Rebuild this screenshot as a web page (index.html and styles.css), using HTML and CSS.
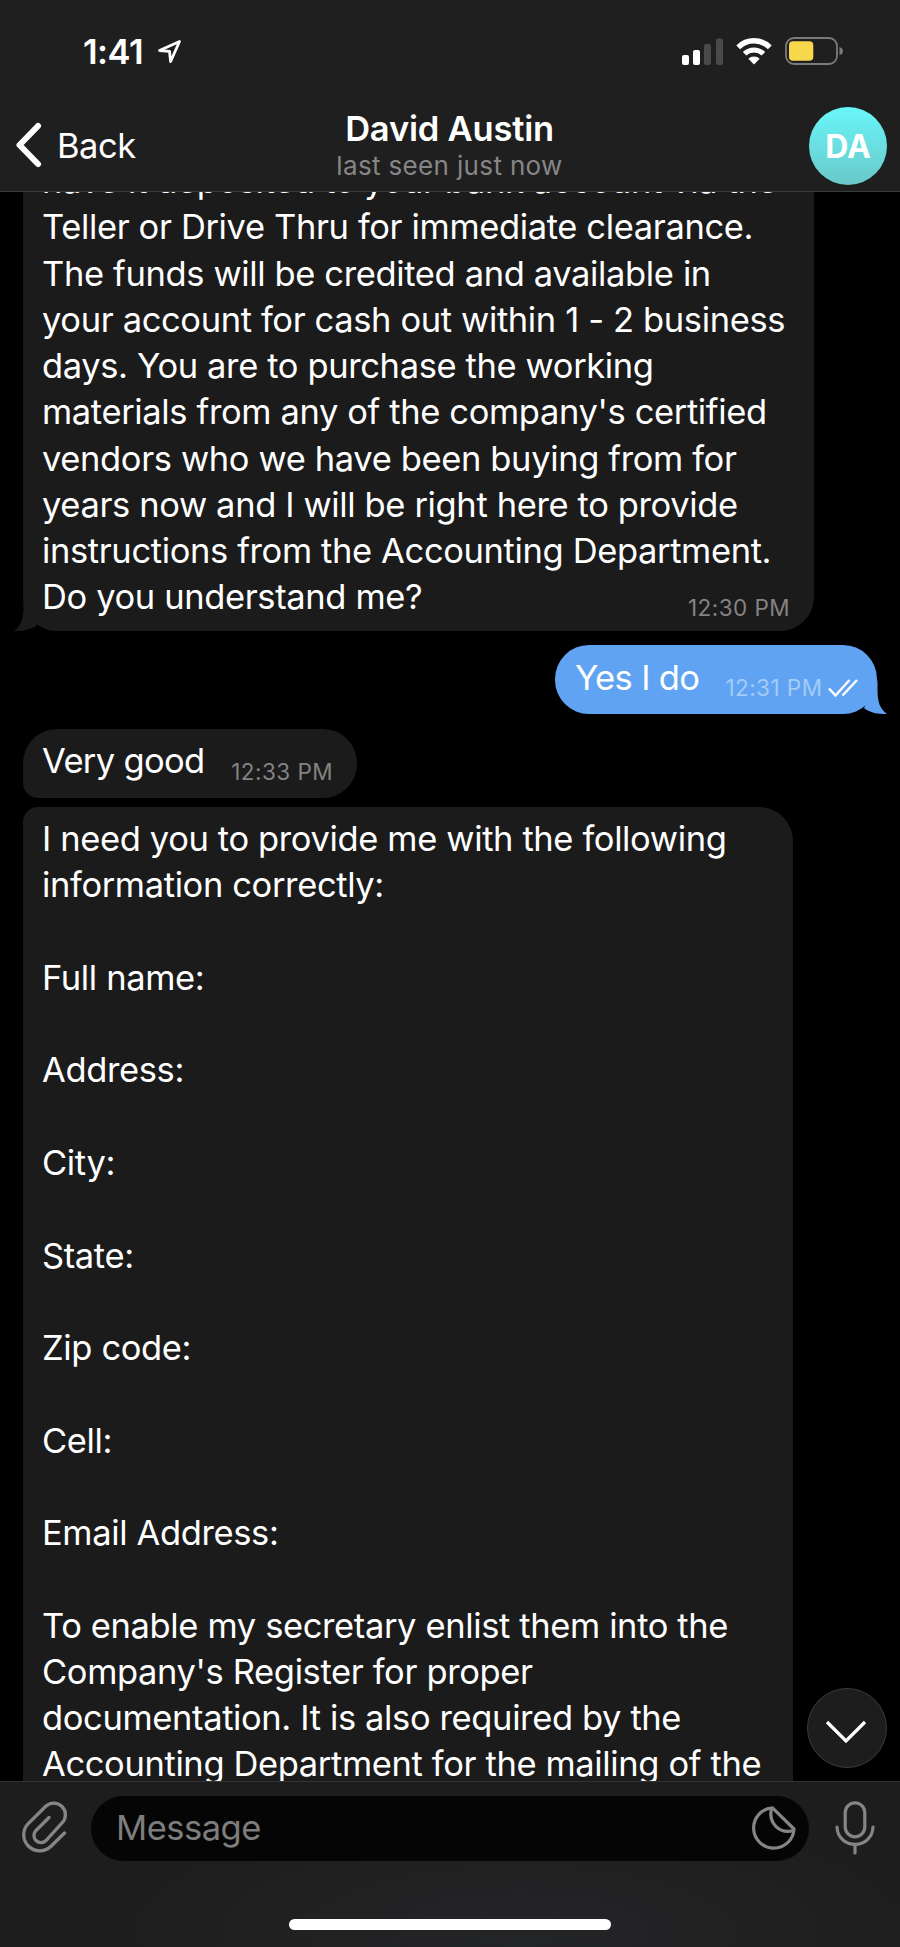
FILE: index.html
```html
<!DOCTYPE html>
<html lang="en">
  <head>
    <title>David Austin</title>
    <meta charset="utf-8">
    <link rel="stylesheet" href="styles.css">
  </head>
  <body>
    <div class="phone">
      <div class="header">
        <div class="statusbar">
          <span class="clock">1:41</span>
          <svg class="location" width="25" height="25" viewBox="0 0 25 25">
            <path d="M22.5 2.5 L2.5 11.5 L12.5 12.3 L13.6 22.5 Z" fill="none" stroke="#fff" stroke-width="2.8" stroke-linejoin="round"/>
          </svg>
          <svg class="signal" width="41" height="27" viewBox="0 0 41 27">
            <rect x="0" y="17" width="7" height="10" rx="2" fill="#fff"/>
            <rect x="11" y="12" width="7" height="15" rx="2" fill="#fff"/>
            <rect x="22" y="6" width="7" height="21" rx="2" fill="#4a4a4a"/>
            <rect x="34" y="0.5" width="7" height="26.5" rx="2" fill="#4a4a4a"/>
          </svg>
          <svg class="wifi" width="36" height="27" viewBox="0 0 36 27">
            <path d="M2.2 9.3 A22.5 22.5 0 0 1 33.8 9.3" fill="none" stroke="#fff" stroke-width="5.4"/>
            <path d="M8.6 15.7 A13.5 13.5 0 0 1 27.4 15.7" fill="none" stroke="#fff" stroke-width="5"/>
            <path d="M18 26.5 L12.3 20.8 A8 8 0 0 1 23.7 20.8 Z" fill="#fff"/>
          </svg>
          <svg class="battery" width="59" height="28" viewBox="0 0 59 28">
            <rect x="1" y="1" width="51" height="26" rx="8" fill="none" stroke="#7b7b7b" stroke-width="1.8"/>
            <rect x="4" y="4.3" width="24.3" height="19.4" rx="4" fill="#f7d74b"/>
            <path d="M54.5 10 Q58 11 58 14 Q58 17 54.5 18 Z" fill="#7b7b7b"/>
          </svg>
        </div>
        <div class="navbar">
          <div class="back">
            <svg width="28" height="48" viewBox="0 0 28 48">
              <path d="M23 5 L4.5 24 L23 43" fill="none" stroke="#fff" stroke-width="6" stroke-linecap="round" stroke-linejoin="round"/>
            </svg>
            <span>Back</span>
          </div>
          <div class="contact">
            <div class="name">David Austin</div>
            <div class="lastseen">last seen just now</div>
          </div>
          <div class="avatar">DA</div>
        </div>
      </div>

      <div class="chat">
        <div class="msg in first">
          <div class="text">have it deposited to your bank account via the<br>
            Teller or Drive Thru for immediate clearance.<br>
            The funds will be credited and available in<br>
            your account for cash out within 1 - 2 business<br>
            days. You are to purchase the working<br>
            materials from any of the company's certified<br>
            vendors who we have been buying from for<br>
            years now and I will be right here to provide<br>
            instructions from the Accounting Department.<br>
            Do you understand me?</div>
          <span class="time">12:30 PM</span>
          <svg class="tail" width="24" height="34" viewBox="0 0 24 34">
            <path d="M9.5 0 V10 C9.5 22 7 29 0 34 C9 34 17 33 23 28 Z" fill="#1b1b1b"/>
          </svg>
        </div>
        <div class="msg out">
          <div class="text">Yes I do</div>
          <span class="time">12:31 PM</span>
          <svg class="checks" width="30" height="18" viewBox="0 0 30 18">
            <path d="M1 9.5 L7.5 16.5 L21.5 1 M14.5 16.5 L29 1" fill="none" stroke="#fff" stroke-width="2.4"/>
          </svg>
          <svg class="tail" width="24" height="34" viewBox="0 0 24 34">
            <path d="M14.5 0 V10 C14.5 22 17 29 24 34 C15 34 7 33 1 28 Z" fill="#60a3f3"/>
          </svg>
        </div>
        <div class="msg in short">
          <div class="text">Very good</div>
          <span class="time">12:33 PM</span>
        </div>
        <div class="msg in long">
          <div class="text">I need you to provide me with the following<br>
            information correctly:<br><br>
            Full name:<br><br>
            Address:<br><br>
            City:<br><br>
            State:<br><br>
            Zip code:<br><br>
            Cell:<br><br>
            Email Address:<br><br>
            To enable my secretary enlist them into the<br>
            Company's Register for proper<br>
            documentation. It is also required by the<br>
            Accounting Department for the mailing of the</div>
        </div>
        <div class="scrolldown">
          <svg width="42" height="24" viewBox="0 0 42 24">
            <path d="M2 2 L21 21 L40 2" fill="none" stroke="#fff" stroke-width="3.2"/>
          </svg>
        </div>
      </div>

      <div class="footer">
        <div class="inputrow">
          <svg class="clip" width="46" height="52" viewBox="0 0 46 52">
            <path d="M27 16.5 L14 29.5 A7 7 0 0 0 24 39.5 L40 22 A11.5 11.5 0 0 0 23.5 5.5 L6.5 22.3 A16 16 0 0 0 29 45.2 L42.5 32" fill="none" stroke="#858585" stroke-width="3.3" stroke-linecap="round"/>
          </svg>
          <div class="field">
            <span>Message</span>
            <svg width="44" height="44" viewBox="0 0 44 44">
              <path d="M20.5 1.8 A20.2 20.2 0 1 0 42 23 Z" fill="none" stroke="#858585" stroke-width="3.2" stroke-linejoin="round"/>
              <path d="M19.5 2 C16 17 27 28.5 42 24.5" fill="none" stroke="#858585" stroke-width="3.2"/>
            </svg>
          </div>
          <svg class="mic" width="40" height="54" viewBox="0 0 40 54">
            <rect x="10.2" y="1.8" width="19.6" height="34" rx="9.8" fill="none" stroke="#858585" stroke-width="3.2"/>
            <path d="M2 26 C3 49 37 49 38 26 M20 44 V52" fill="none" stroke="#858585" stroke-width="3.2" stroke-linecap="round"/>
          </svg>
        </div>
        <div class="homebar"></div>
      </div>
    </div>
  </body>
</html>
```
FILE: styles.css
```css
body {
  margin: 0;
  background-color: #000;
  color: #fff;
  font-family: Inter, "Liberation Sans", Arial, sans-serif;
  font-size: 34.5px;
}
svg {
  display: block;
  flex: none;
}
.phone {
  display: flex;
  flex-direction: column;
  width: 900px;
  height: 1947px;
  overflow: hidden;
}

/* header */
.header {
  box-sizing: border-box;
  flex: none;
  height: 192px;
  background-color: #1f1f1f;
  border-bottom: 1px solid #3a3a3a;
}
.statusbar {
  display: flex;
  align-items: center;
  height: 102px;
  padding-left: 83px;
}
.clock {
  width: 74px;
  font-weight: 600;
  letter-spacing: -0.5px;
}
.signal {
  margin-left: 500px;
}
.wifi {
  margin-left: 13px;
}
.battery {
  margin-left: 13px;
}
.navbar {
  display: grid;
  grid-template-columns: 1fr auto 1fr;
  align-items: center;
  height: 88px;
  padding: 0 13px 0 15px;
}
.back {
  display: flex;
  align-items: center;
  gap: 14px;
  padding-bottom: 2px;
  letter-spacing: -0.5px;
}
.contact {
  padding-right: 3px;
  text-align: center;
}
.name {
  line-height: 40px;
  font-weight: 600;
  letter-spacing: -0.2px;
}
.lastseen {
  line-height: 34px;
  font-size: 26px;
  letter-spacing: 0.35px;
  color: #868686;
}
.avatar {
  justify-self: end;
  width: 78px;
  height: 78px;
  line-height: 79px;
  border-radius: 50%;
  background: linear-gradient(#69f6f8, #6ac8ca);
  text-align: center;
  font-size: 32px;
  font-weight: 700;
}

/* messages */
.chat {
  position: relative;
  display: flex;
  flex-direction: column;
  align-items: flex-start;
  height: 1589px;
  overflow: hidden;
}
.msg {
  position: relative;
  box-sizing: border-box;
  flex: none;
  display: flex;
  justify-content: space-between;
  align-items: flex-end;
  margin-left: 23px;
  border-radius: 34px;
}
.text {
  line-height: 46.27px;
  letter-spacing: -0.37px;
  white-space: nowrap;
}
.in {
  background-color: #1b1b1b;
  padding-left: 19px;
}
.out {
  align-self: flex-end;
  justify-content: flex-start;
  width: 322px;
  height: 69px;
  margin: 14.5px 23px 0 0;
  padding: 0 0 13px 20px;
  background-color: #60a3f3;
}
.out .text,
.short .text {
  letter-spacing: -0.65px;
}
.first {
  width: 791px;
  margin-top: -34px;
  padding-bottom: 10px;
}
.short {
  width: 334px;
  height: 69px;
  margin-top: 14.5px;
  padding-bottom: 13px;
  border-bottom-left-radius: 15px;
}
.long {
  width: 770px;
  margin-top: 9px;
  padding-top: 9.5px;
  border-radius: 15px 34px 0 0;
}
.time {
  line-height: 26px;
  font-size: 22.5px;
  letter-spacing: 0.45px;
  color: #838383;
}
.first .time {
  position: absolute;
  right: 24px;
  bottom: 10px;
}
.short .time {
  margin: 0 24px 0 0;
}
.out .time {
  margin: 0 0 0 26px;
  color: #a5cbf8;
}
.checks {
  margin: 0 0 4px 6px;
}
.tail {
  position: absolute;
  bottom: 0;
}
.in .tail {
  left: -9.5px;
}
.out .tail {
  right: -9.5px;
}
.scrolldown {
  position: absolute;
  right: 13px;
  bottom: 13px;
  display: flex;
  align-items: center;
  justify-content: center;
  box-sizing: border-box;
  width: 80px;
  height: 80px;
  padding: 8px 2px 0 0;
  border: 1px solid #3a3a3a;
  border-radius: 50%;
  background-color: #1d1d1d;
}

/* input */
.footer {
  box-sizing: border-box;
  flex: none;
  height: 166px;
  border-top: 1px solid #333;
  background: radial-gradient(ellipse 420px 130px at 520px 150px, #242527, #1d1d1d);
}
.inputrow {
  display: flex;
  align-items: center;
  padding: 14px 25px 0 22px;
}
.clip {
  margin-bottom: 4px;
}
.mic {
  margin-bottom: 2px;
}
.field {
  display: flex;
  flex: none;
  align-items: center;
  justify-content: space-between;
  box-sizing: border-box;
  width: 718px;
  height: 65px;
  margin: 0 26px 0 23px;
  padding: 0 13px 2px 25px;
  border-radius: 33px;
  background-color: #050505;
  color: #7d7d7d;
  letter-spacing: -0.5px;
}
.homebar {
  width: 322px;
  height: 11px;
  margin: 58px auto 0;
  border-radius: 6px;
  background-color: #fff;
}
```
